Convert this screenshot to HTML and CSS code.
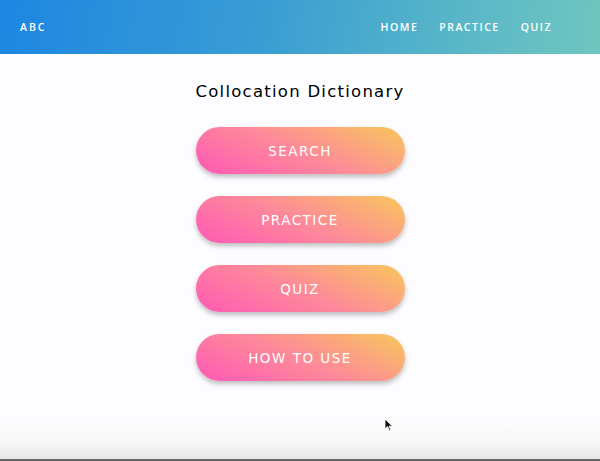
FILE: index.html
```html
<!DOCTYPE html>
<html lang="en">
<head>
<meta charset="utf-8">
<title>Collocation Dictionary</title>
<link rel="stylesheet" href="styles.css">
</head>
<body>
<div class="page">
  <header class="topbar">
    <a class="logo" href="#">ABC</a>
    <nav class="nav">
      <a href="#">HOME</a>
      <a href="#">PRACTICE</a>
      <a href="#">QUIZ</a>
    </nav>
  </header>
  <main class="main">
    <h1 class="title">Collocation Dictionary</h1>
    <div class="buttons">
      <a class="btn" href="#">SEARCH</a>
      <a class="btn" href="#">PRACTICE</a>
      <a class="btn" href="#">QUIZ</a>
      <a class="btn" href="#">HOW TO USE</a>
    </div>
  </main>
  <div class="bottom-fade"></div>
  <svg class="cursor" width="10" height="14" viewBox="0 0 10 14"><path d="M1 1 L1 11 L3.5 8.6 L5.4 12.6 L6.8 12 L5 8.2 L8.4 8.2 Z" fill="#111" stroke="#fff" stroke-width="0.8"/></svg>
</div>
</body>
</html>
```
FILE: styles.css
```css
* { box-sizing: border-box; }
html, body { margin: 0; padding: 0; }
body {
  font-family: "DejaVu Sans", "Open Sans", sans-serif;
  background: #fdfdff;
  color: #111;
}
.page {
  position: relative;
  height: 461px;
  display: flex;
  flex-direction: column;
  overflow: hidden;
}
.topbar {
  height: 54px;
  flex: none;
  display: flex;
  align-items: center;
  justify-content: space-between;
  padding: 0 48px 0 20px;
  background: linear-gradient(100deg, #1d86e2 0%, #3a9ed3 45%, #5db9c6 80%, #6fc6bf 100%);
}
.logo, .nav a {
  font-family: "Open Sans", "DejaVu Sans", sans-serif;
  color: #fff;
  text-decoration: none;
  font-weight: 600;
  font-size: 10.5px;
  letter-spacing: 1.5px;
}
.logo { letter-spacing: 2px; }
.nav {
  display: flex;
  gap: 21px;
}
.main {
  flex: 1;
  display: flex;
  flex-direction: column;
  align-items: center;
}
.title {
  margin: 28px 0 0;
  font-size: 16.5px;
  font-weight: normal;
  letter-spacing: 1.25px;
  line-height: 20px;
  color: #000;
}
.buttons {
  margin-top: 25px;
  display: flex;
  flex-direction: column;
  gap: 22px;
}
.btn {
  width: 209px;
  height: 47px;
  border-radius: 24px;
  display: flex;
  align-items: center;
  justify-content: center;
  color: #fff;
  text-decoration: none;
  font-size: 13.5px;
  letter-spacing: 1.5px;
  background: linear-gradient(25deg, #ff58b6 0%, #fd8b98 50%, #f8c75b 100%);
  box-shadow: 0 3px 5px rgba(0, 0, 0, 0.25);
}
.bottom-fade {
  height: 40px;
  flex: none;
  background: linear-gradient(#fdfdff 0%, #f7f7f7 55%, #e8e8e8 100%);
  border-bottom: 2px solid #666;
}
.cursor {
  position: absolute;
  left: 384px;
  top: 418px;
}
```
